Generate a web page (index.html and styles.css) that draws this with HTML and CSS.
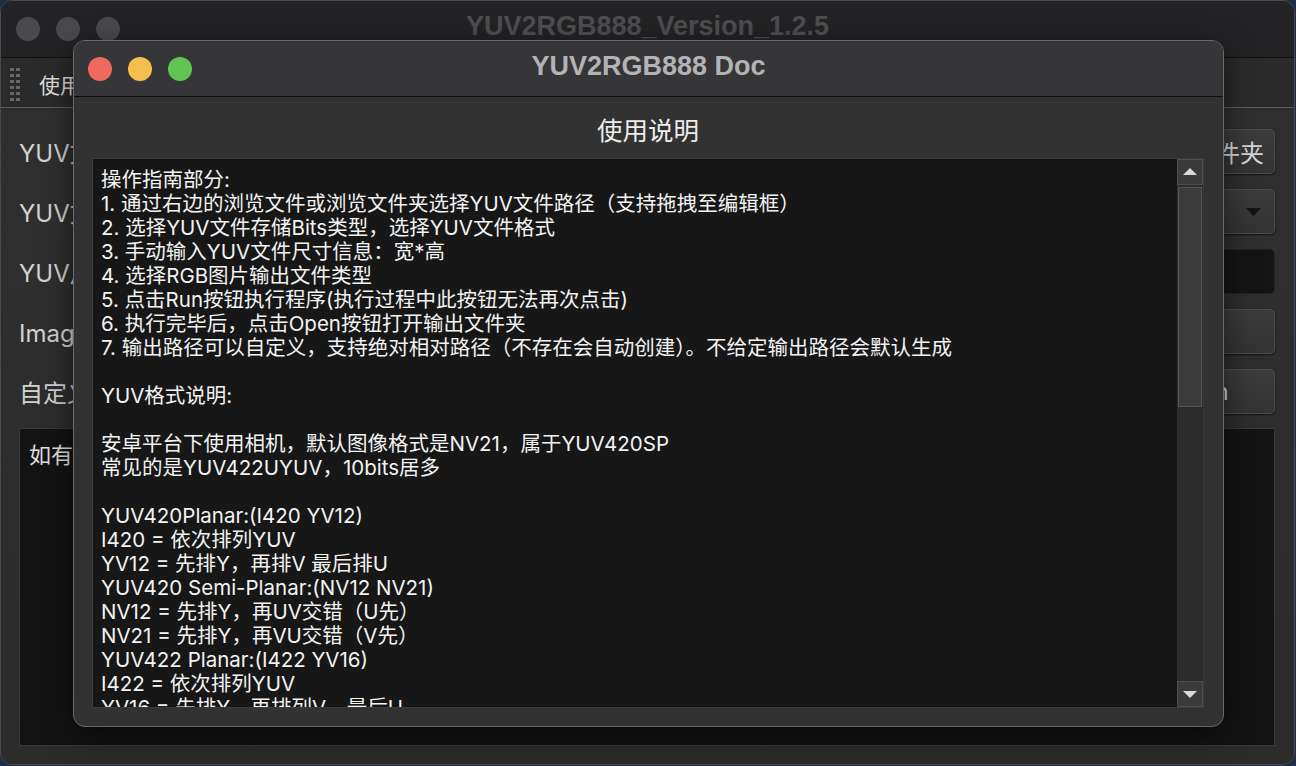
FILE: index.html
```html
<!DOCTYPE html>
<html lang="zh-CN">
<head>
<meta charset="utf-8">
<title>YUV2RGB888 Doc</title>
<link rel="stylesheet" href="styles.css">
</head>
<body>
<div class="main-win">
  <div class="main-title">
    <div class="lights">
      <span class="light gray"></span><span class="light gray"></span><span class="light gray"></span>
    </div>
    <div class="main-title-text">YUV2RGB888_Version_1.2.5</div>
    <div></div>
  </div>
  <div class="main-toolbar">
    <div class="grip">
      <i></i><i></i><i></i><i></i><i></i><i></i><i></i><i></i><i></i><i></i><i></i><i></i>
    </div>
    <span class="menu-item">使用说明</span>
  </div>
  <div class="main-body">
    <div class="row">
      <span class="label">YUV文件路径</span>
      <span class="btn btn-wide">浏览文件夹</span>
    </div>
    <div class="row">
      <span class="label">YUV文件类型</span>
      <span class="btn combo"><svg width="15" height="8" viewBox="0 0 15 8"><polygon points="0,0 15,0 7.5,8" fill="#141414"/></svg></span>
    </div>
    <div class="row">
      <span class="label">YUV尺寸</span>
      <span class="field"></span>
    </div>
    <div class="row">
      <span class="label">Image类型</span>
      <span class="btn btn-run">Run</span>
    </div>
    <div class="row">
      <span class="label">自定义输出路径</span>
      <span class="btn btn-open">Open</span>
    </div>
    <div class="log-box">如有问题请联系作者</div>
  </div>
</div>

<div class="doc-win">
  <div class="doc-title">
    <div class="lights">
      <span class="light red"></span><span class="light yellow"></span><span class="light green"></span>
    </div>
    <div class="doc-title-text">YUV2RGB888 Doc</div>
    <div></div>
  </div>
  <div class="doc-body">
    <div class="doc-heading">使用说明</div>
    <div class="doc-box">
      <div class="doc-text">操作指南部分:
1. 通过右边的浏览文件或浏览文件夹选择YUV文件路径（支持拖拽至编辑框）
2. 选择YUV文件存储Bits类型，选择YUV文件格式
3. 手动输入YUV文件尺寸信息：宽*高
4. 选择RGB图片输出文件类型
5. 点击Run按钮执行程序(执行过程中此按钮无法再次点击)
6. 执行完毕后，点击Open按钮打开输出文件夹
7. 输出路径可以自定义，支持绝对相对路径（不存在会自动创建）。不给定输出路径会默认生成

YUV格式说明:

安卓平台下使用相机，默认图像格式是NV21，属于YUV420SP
常见的是YUV422UYUV，10bits居多

YUV420Planar:(I420 YV12)
I420 = 依次排列YUV
YV12 = 先排Y，再排V 最后排U
YUV420 Semi-Planar:(NV12 NV21)
NV12 = 先排Y，再UV交错（U先）
NV21 = 先排Y，再VU交错（V先）
YUV422 Planar:(I422 YV16)
I422 = 依次排列YUV
YV16 = 先排Y，再排列V，最后U
YUV422 Semi-Planar:(NV16 NV61)</div>
      <div class="scrollbar">
        <div class="sb-btn"><svg width="14" height="8" viewBox="0 0 14 8"><polygon points="7,0 14,7 0,7" fill="#d9d9d9"/></svg></div>
        <div class="sb-track">
          <div class="sb-thumb"></div>
        </div>
        <div class="sb-btn"><svg width="14" height="8" viewBox="0 0 14 8"><polygon points="0,1 14,1 7,8" fill="#d9d9d9"/></svg></div>
      </div>
    </div>
  </div>
</div>
</body>
</html>
```

FILE: styles.css
```css
html, body {
  margin: 0;
  padding: 0;
}

body {
  width: 1296px;
  height: 766px;
  overflow: hidden;
  position: relative;
  background: #1b2d48;
  font-family: "Inter", "Noto Sans CJK SC", sans-serif;
}

/* ---------- background main window ---------- */
.main-win {
  width: 1295px;
  height: 765px;
  box-sizing: border-box;
  border: 1px solid #4a4a4c;
  border-radius: 12px;
  background: #2d2d2d;
  overflow: hidden;
  display: flex;
  flex-direction: column;
}

.main-title {
  height: 56px;
  flex: none;
  background: #232326;
  border-bottom: 1px solid #111112;
  display: grid;
  grid-template-columns: 1fr auto 1fr;
  align-items: center;
}

.lights {
  display: flex;
  gap: 16px;
  padding-left: 15px;
}

.light {
  width: 24px;
  height: 24px;
  border-radius: 50%;
  display: block;
}

.light.gray { background: #4a4a4c; }
.light.red { background: #ee6a5f; }
.light.yellow { background: #f5bf4f; }
.light.green { background: #61c554; }

.main-title-text {
  font-family: "Liberation Sans", sans-serif;
  font-weight: bold;
  font-size: 27px;
  color: #4e4e50;
  margin-bottom: 6px;
}

.main-toolbar {
  height: 49px;
  flex: none;
  background: #2a2a2b;
  border-bottom: 1px solid #5c5c5c;
  display: flex;
  align-items: center;
}

.grip {
  display: grid;
  grid-template-columns: 4px 4px;
  grid-auto-rows: 3px;
  column-gap: 2px;
  row-gap: 3px;
  margin-left: 9px;
  margin-top: 4px;
}

.grip i {
  display: block;
  background: #666668;
}

.menu-item {
  margin-left: 19px;
  font-size: 21px;
  color: #dcdcdc;
  margin-top: 2px;
}

.main-body {
  flex: 1;
  display: flex;
  flex-direction: column;
  gap: 15px;
  padding: 21px 18px 18px 18px;
  background: linear-gradient(#2f2f2f, #2b2b2b);
}

.row {
  height: 45px;
  display: flex;
  align-items: center;
  justify-content: space-between;
}

.label {
  font-size: 24px;
  color: #d2d2d2;
}

.btn {
  height: 45px;
  box-sizing: border-box;
  border: 1px solid #4c4c4c;
  border-radius: 5px;
  background: linear-gradient(#3c3c3c, #333333);
  box-shadow: 0 1px 2px rgba(0, 0, 0, 0.6);
  color: #d6d6d6;
  font-size: 24px;
  display: flex;
  align-items: center;
  justify-content: center;
  margin-right: 1px;
}

.btn-wide { width: 142px; }
.btn-run { width: 220px; }
.btn-open { width: 154px; }

.combo {
  width: 300px;
  justify-content: flex-end;
  padding-right: 13px;
}

.field {
  width: 300px;
  height: 45px;
  box-sizing: border-box;
  border: 1px solid #232323;
  border-radius: 5px;
  background: #141414;
  margin-right: 1px;
}

.log-box {
  flex: 1;
  margin-top: -1px;
  margin-right: 1px;
  box-sizing: border-box;
  border: 1px solid #3a3a3a;
  background: #131313;
  color: #e0e0e0;
  font-size: 22px;
  padding: 8px 9px;
}

/* ---------- foreground doc window ---------- */
.doc-win {
  position: absolute;
  left: 73px;
  top: 40px;
  width: 1151px;
  height: 687px;
  box-sizing: border-box;
  border: 1px solid #6a6a6c;
  border-radius: 12px;
  background: #323232;
  overflow: hidden;
  display: flex;
  flex-direction: column;
  box-shadow: 0 8px 30px rgba(0, 0, 0, 0.55);
}

.doc-title {
  height: 55px;
  flex: none;
  background: #363638;
  border-bottom: 1px solid #0e0e0e;
  display: grid;
  grid-template-columns: 1fr auto 1fr;
  align-items: center;
}

.doc-title .lights {
  padding-left: 14px;
}

.doc-title-text {
  font-family: "Liberation Sans", sans-serif;
  font-weight: bold;
  font-size: 27px;
  color: #b3b3b5;
  margin-bottom: 4px;
}

.doc-body {
  flex: 1;
  display: flex;
  flex-direction: column;
  padding: 0 19px 18px 18px;
  min-height: 0;
}

.doc-heading {
  text-align: center;
  font-size: 25.5px;
  line-height: 30px;
  color: #ececec;
  padding-top: 17px;
  margin-bottom: 14px;
  font-family: "Noto Sans CJK SC", sans-serif;
}

.doc-box {
  flex: 1;
  min-height: 0;
  display: flex;
  border: 1px solid #3b3b3b;
  background: #171717;
}

.doc-text {
  flex: 1;
  overflow: hidden;
  white-space: pre-line;
  padding: 9px 0 0 8px;
  font-size: 20.5px;
  line-height: 24px;
  color: #f3f3f3;
}

.scrollbar {
  width: 26px;
  flex: none;
  display: flex;
  flex-direction: column;
  background: #2b2b2b;
}

.sb-btn {
  height: 26px;
  flex: none;
  box-sizing: border-box;
  border: 1px solid #4e4e4e;
  background: #3a3a3a;
  display: flex;
  align-items: center;
  justify-content: center;
}

.sb-track {
  flex: 1;
  padding: 2px 0;
  background: #2c2c2c;
}

.sb-thumb {
  height: 220px;
  box-sizing: border-box;
  border: 1px solid #555555;
  background: #3b3b3b;
  margin: 0 1px;
}
```
